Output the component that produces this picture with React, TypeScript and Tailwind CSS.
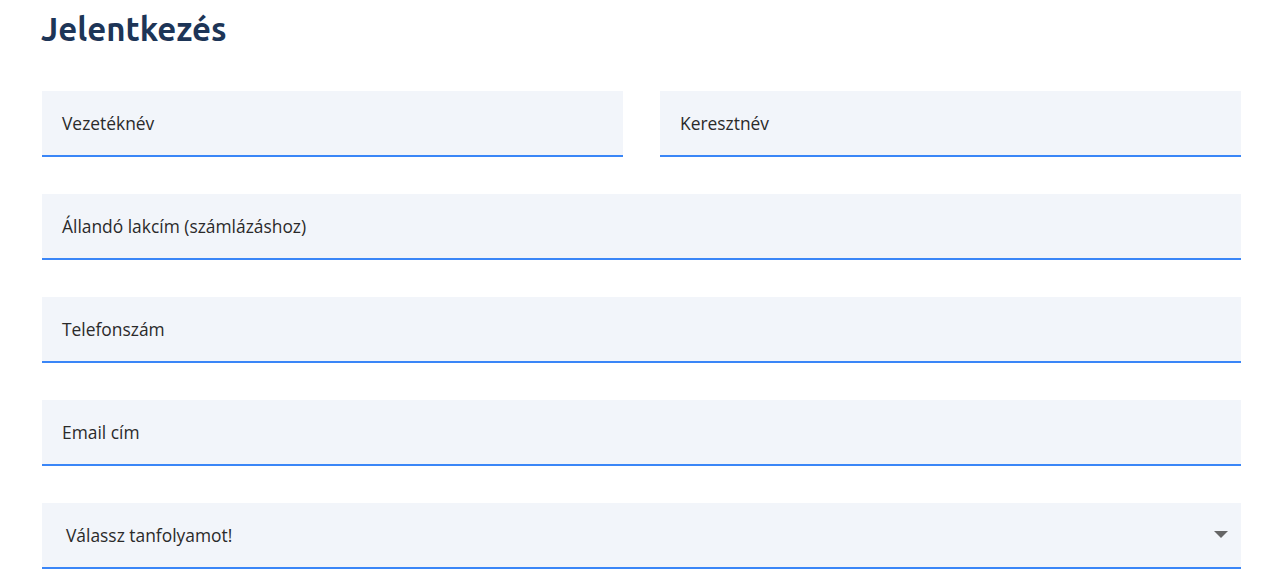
import React from "react";

function Field({ label, className = "" }: { label: string; className?: string }) {
  return (
    <div className={`h-[66px] bg-[#f2f5fa] border-b-2 border-[#3a86f7] flex items-center pl-5 ${className}`}>
      <span className="text-[17.4px] text-[#2a2a2a]">{label}</span>
    </div>
  );
}

export default function App() {
  return (
    <div className="w-[1268px] h-[578px] bg-white overflow-hidden" style={{ fontFamily: '"Open Sans", "Noto Sans", sans-serif' }}>
      <div className="pl-[42px] pr-[27px]">
        <h1 className="pt-[8px] text-[33px] leading-[42px] font-bold text-[#1d3557] ml-[-1px]" style={{ fontFamily: '"Ubuntu", "Open Sans", sans-serif' }}>
          Jelentkezés
        </h1>
        <div className="mt-[41px] flex flex-col gap-[37px]">
          <div className="flex gap-[37px]">
            <Field label="Vezetéknév" className="flex-1" />
            <Field label="Keresztnév" className="flex-1" />
          </div>
          <Field label="Állandó lakcím (számlázáshoz)" />
          <Field label="Telefonszám" />
          <Field label="Email cím" />
          <div className="h-[66px] bg-[#f2f5fa] border-b-2 border-[#3a86f7] flex items-center pl-[24px] pr-[13px] justify-between">
            <span className="text-[17.4px] text-[#2a2a2a]">Válassz tanfolyamot!</span>
            <svg width="14" height="8" viewBox="0 0 14 8">
              <path d="M0 0 L14 0 L7 7 Z" fill="#666" />
            </svg>
          </div>
        </div>
      </div>
    </div>
  );
}
